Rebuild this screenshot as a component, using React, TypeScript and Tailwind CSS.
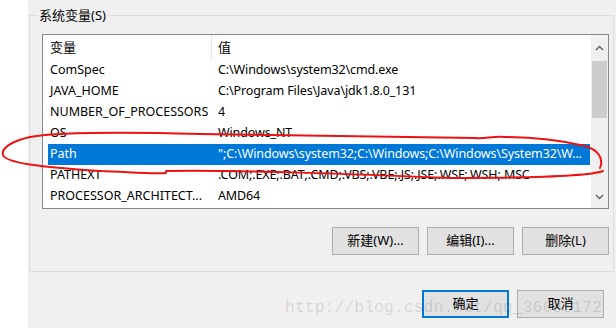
import React from "react";

const rows: [string, string][] = [
  ["ComSpec", "C:\\Windows\\system32\\cmd.exe"],
  ["JAVA_HOME", "C:\\Program Files\\Java\\jdk1.8.0_131"],
  ["NUMBER_OF_PROCESSORS", "4"],
  ["OS", "Windows_NT"],
  ["Path", "\";C:\\Windows\\system32;C:\\Windows;C:\\Windows\\System32\\W..."],
  ["PATHEXT", ".COM;.EXE;.BAT;.CMD;.VBS;.VBE;.JS;.JSE;.WSF;.WSH;.MSC"],
  ["PROCESSOR_ARCHITECT...", "AMD64"],
];

const font = { fontFamily: '"Noto Sans", "Noto Sans CJK SC", sans-serif' };

function Button({ label, primary }: { label: string; primary?: boolean }) {
  return (
    <div
      className={
        "w-[87px] h-[28px] flex items-center justify-center bg-[#e1e1e1] text-[13px] text-black " +
        (primary ? "border-2 border-[#0078d7]" : "border border-[#adadad]")
      }
    >
      {label}
    </div>
  );
}

function Chevron({ up }: { up?: boolean }) {
  return (
    <svg width="9" height="6" viewBox="0 0 9 6" className="block">
      <path
        d={up ? "M1 5 L4.5 1.5 L8 5" : "M1 1 L4.5 4.5 L8 1"}
        fill="none"
        stroke="#606060"
        strokeWidth="1.4"
      />
    </svg>
  );
}

export default function App() {
  return (
    <div className="relative w-[616px] h-[328px] flex bg-white overflow-hidden" style={font}>
      {/* white strip on the left */}
      <div className="w-[28px] shrink-0 bg-white" />

      <div className="flex-1 min-w-0 bg-[#f0f0f0] pt-[15px]">
        {/* group box */}
        <div className="relative ml-[1px] w-[585px] border border-[#dcdcdc] pb-[16px]">
          <span className="absolute left-[8px] -top-[10px] px-[1px] bg-[#f0f0f0] text-[13px] leading-[18px] text-black">
            系统变量(S)
          </span>

          {/* list view */}
          <div className="mt-[18px] ml-[12px] w-[567px] h-[175px] border border-[#828790] bg-white flex overflow-hidden">
            <div className="flex-1 min-w-0 overflow-hidden pl-[5px] text-[12.5px] text-black">
              <div className="h-[25px] flex items-center">
                <div className="w-[163px] shrink-0 pl-[2px] text-[13px]">变量</div>
                <div className="w-px h-full bg-[#e5e5e5]" />
                <div className="pl-[6px] text-[13px]">值</div>
              </div>
              {rows.map(([name, value]) => {
                const sel = name === "Path";
                return (
                  <div
                    key={name}
                    className={
                      "h-[21px] flex items-center whitespace-nowrap " +
                      (sel ? "bg-[#0078d7] text-white mr-[1px]" : "")
                    }
                  >
                    <div className="w-[163px] shrink-0 pl-[2px] overflow-hidden">{name}</div>
                    <div className="pl-[7px] min-w-0 overflow-hidden tracking-[-0.12px]">{value}</div>
                  </div>
                );
              })}
            </div>

            {/* scrollbar */}
            <div className="w-[17px] shrink-0 bg-[#f0f0f0] flex flex-col items-center">
              <div className="h-[26px] flex items-center justify-center">
                <Chevron up />
              </div>
              <div className="w-[15px] h-[57px] bg-[#cdcdcd]" />
              <div className="flex-1" />
              <div className="h-[22px] flex items-center justify-center">
                <Chevron />
              </div>
            </div>
          </div>

          <div className="mt-[18px] pr-[4px] flex justify-end gap-[8px]">
            <Button label="新建(W)..." />
            <Button label="编辑(I)..." />
            <Button label="删除(L)" />
          </div>
        </div>

        <div className="mt-[18px] pr-[12px] flex justify-end gap-[8px]">
          <Button label="确定" primary />
          <Button label="取消" />
        </div>
      </div>

      {/* blog watermark */}
      <div
        className="absolute left-[285px] top-[297px] text-[16.5px] leading-[22px] text-[rgba(0,0,0,0.12)] pointer-events-none whitespace-nowrap"
        style={{ fontFamily: '"Liberation Mono", monospace' }}
      >
        http://blog.csdn.net/qq_36685172
      </div>

      {/* red freehand circle */}
      <svg className="absolute inset-0 pointer-events-none" width="616" height="328" viewBox="0 0 616 328">
        <path
          d="M600 168 C604 158 598 150 585 146 C560 140 530 137 505 137 C492 136 486 139 475 138 C400 137 300 136 200 134 C120 132 60 132 30 137 C12 141 1 148 3 155 C6 163 40 167 100 171 C130 172 150 174 166 173 M166 171 C250 170 350 174 450 178 C540 178 590 176 603 171"
          fill="none"
          stroke="#ee1111"
          strokeWidth="2"
          strokeLinecap="round"
        />
      </svg>
    </div>
  );
}
